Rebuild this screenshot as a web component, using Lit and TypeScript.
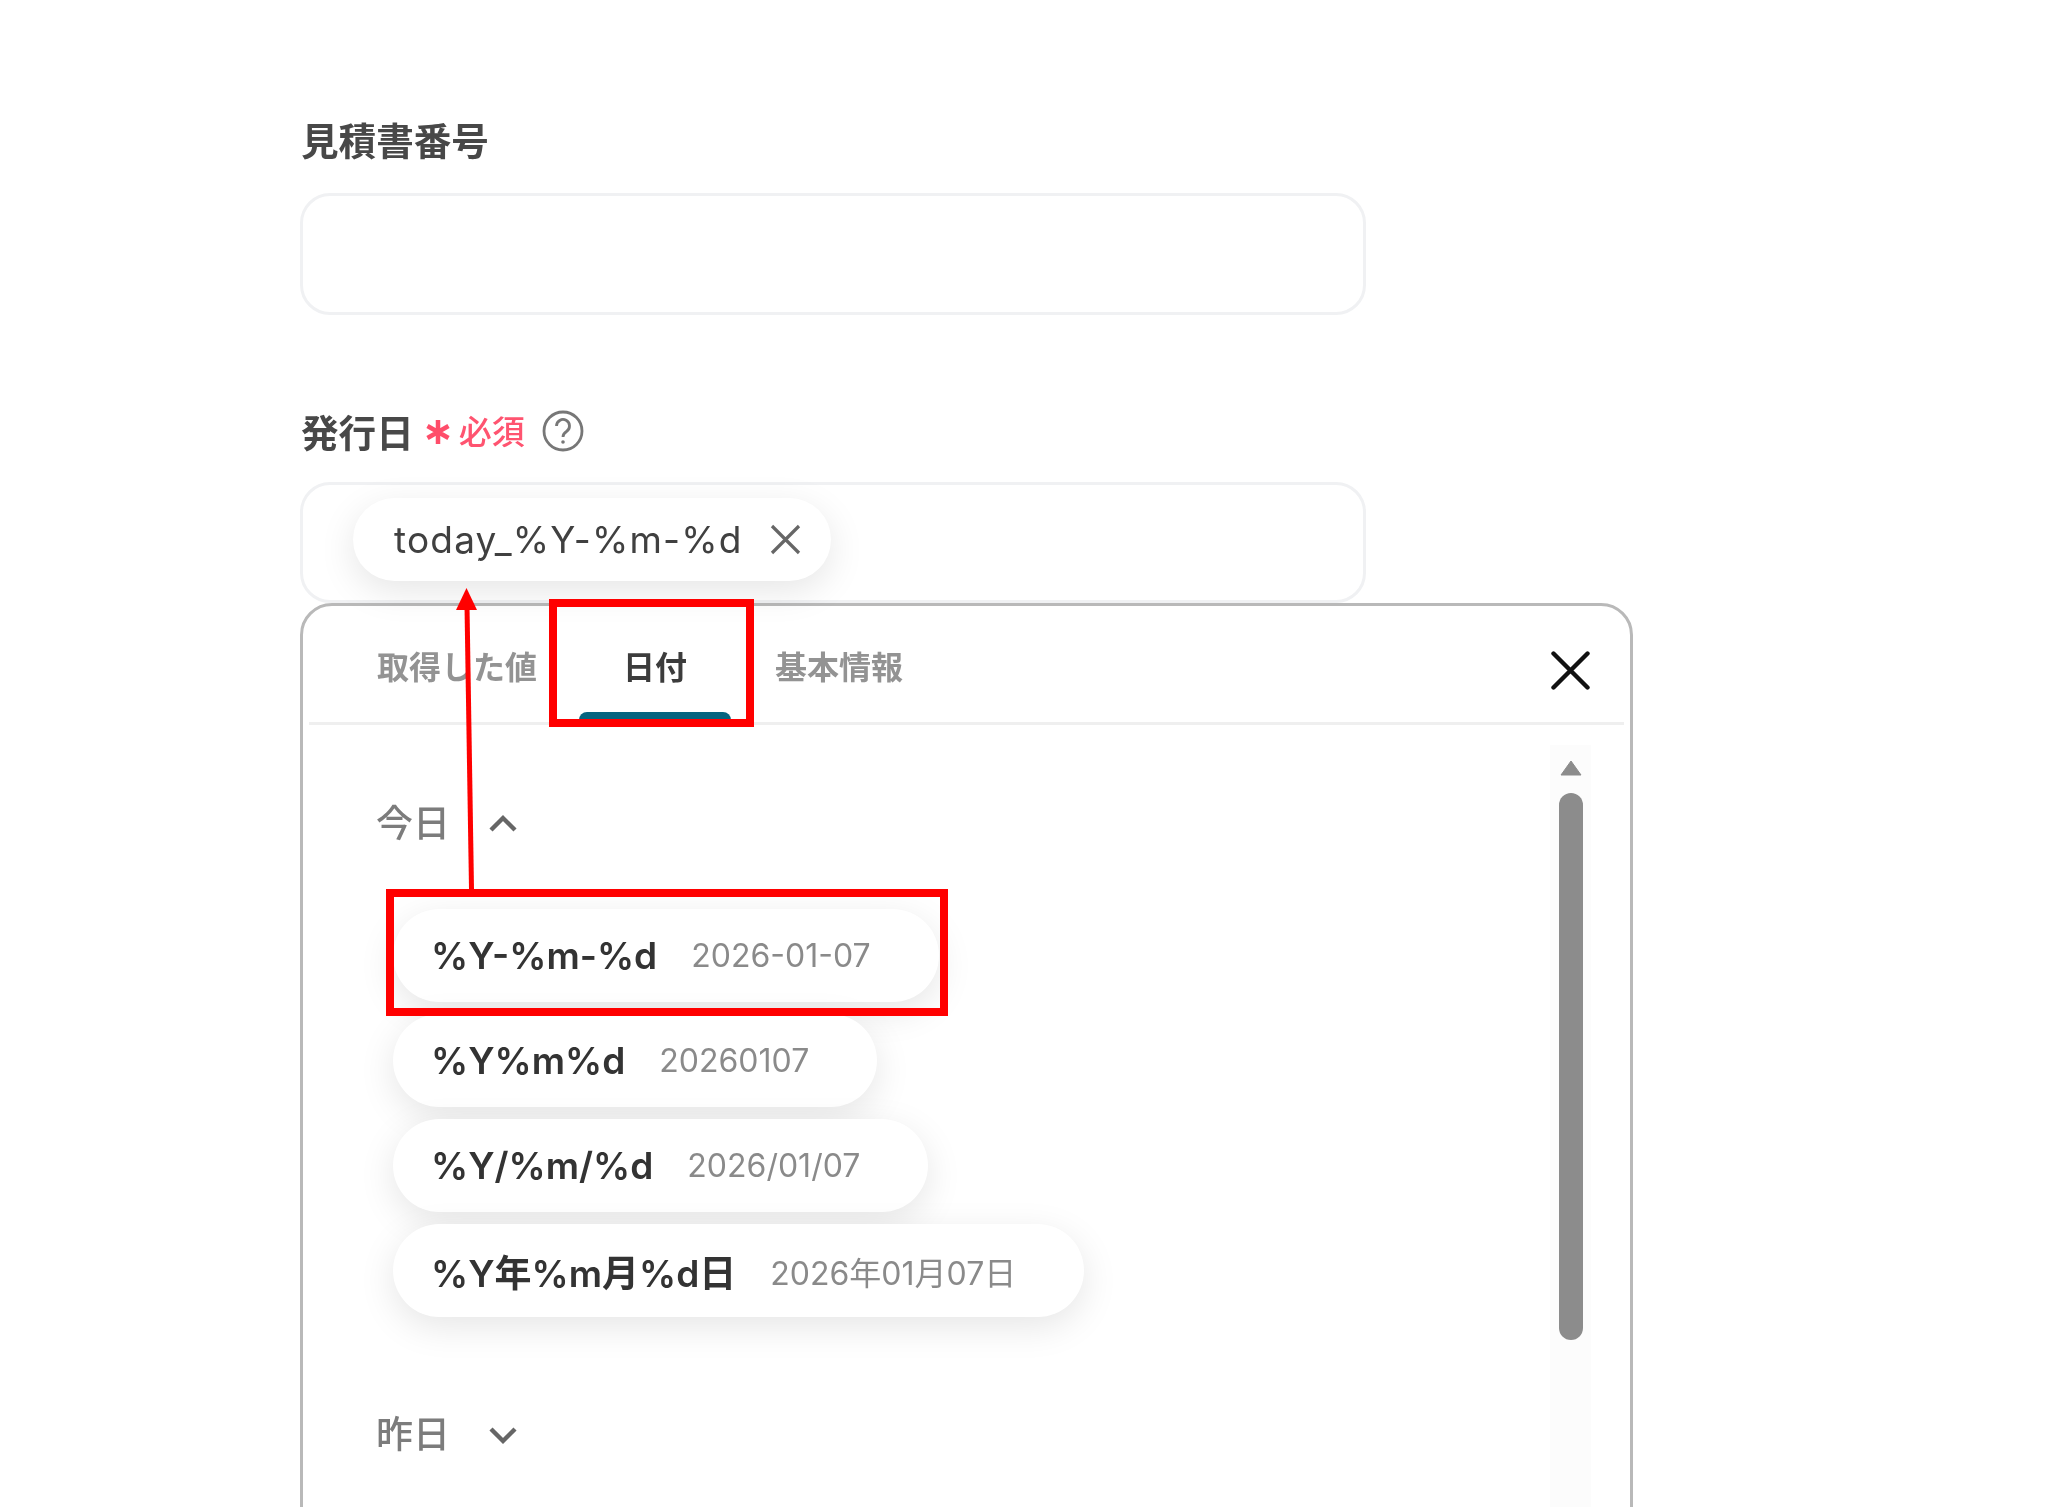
import { LitElement, html, css, svg } from "lit";
import { customElement } from "lit/decorators.js";

const items = [
  { name: "%Y-%m-%d", value: "2026-01-07" },
  { name: "%Y%m%d", value: "20260107" },
  { name: "%Y/%m/%d", value: "2026/01/07" },
  { name: "%Y年%m月%d日", value: "2026年01月07日" },
];

@customElement("app-root")
export class AppRoot extends LitElement {
  static styles = css`
    :host {
      display: block;
      height: 1507px;
      overflow: hidden;
      position: relative;
      background: #fff;
      font-family: Inter, "Noto Sans CJK JP", sans-serif;
      color: #333;
    }
    .page { padding: 110px 0 0 300px; width: 1333px; filter: blur(0.6px); }
    .label {
      display: flex; align-items: center; height: 56px;
      font-size: 37.6px; font-weight: 700; color: #484848; padding-left: 1px;
    }
    .label.second { margin-top: 87px; }
    .req { font-size: 33px; font-weight: 500; color: #ff5470; margin-left: 8px; }
    .star { margin-left: 11px; margin-top: 4px; display: block; }
    .help { margin-left: 17px; margin-top: 2px; display: block; }
    .input {
      width: 1066px; height: 122px; box-sizing: border-box;
      border: 3px solid #f0f1f3; border-radius: 30px; background: #fff;
    }
    .input.first { margin-top: 27px; }
    .input.second { margin-top: 24px; height: 121px; display: flex; align-items: center; padding: 0 0 6px 50px; }
    .chip {
      height: 83px; box-sizing: border-box; display: flex; align-items: center; gap: 27px;
      padding: 0 30px 0 41px; border-radius: 42px; background: #fff;
      box-shadow: 0 10px 36px rgba(0,0,0,.1);
      font-size: 37px; letter-spacing: 1.2px; color: #404040;
    }
    .chip svg { display: block; }
    .popup {
      box-sizing: border-box; height: 1000px; border: 3px solid #b9b9b9; border-radius: 32px;
      background: #fff; display: flex; flex-direction: column; padding: 0 6px;
    }
    .tabs { display: flex; height: 116px; border-bottom: 3px solid #efefef; padding-left: 24px; box-sizing: content-box; }
    .tab {
      position: relative; padding: 37px 44px 0; font-size: 32px; font-weight: 700; line-height: 50px; color: #939393;
    }
    .tab:first-child { padding-right: 42px; }
    .tab.active { color: #3c3c3c; }
    .tab.active::after {
      content: ""; position: absolute; left: 0; right: 0; bottom: -2px; height: 12px;
      background: #04647f; border-radius: 8px 8px 0 0;
    }
    .close { margin: 45px 34px 0 auto; display: block; }
    .body { flex: 1; display: flex; min-height: 0; }
    .content { flex: 1; padding: 68px 0 0 67px; }
    .heading {
      display: flex; align-items: center; gap: 37px; height: 56px;
      font-size: 37px; font-weight: 500; color: #7c7c7c;
    }
    .heading svg { display: block; margin-top: 5px; margin-left: 1px; }
    .list { display: flex; flex-direction: column; align-items: flex-start; gap: 12px; margin: 60px 0 87px 17px; }
    .item {
      height: 93px; box-sizing: border-box; display: flex; align-items: center; gap: 34px;
      padding: 0 68px 0 38px; border-radius: 47px; background: #fff;
      box-shadow: 0 10px 36px rgba(0,0,0,.1);
    }
    .name { font-size: 37px; font-weight: 600; color: #333; }
    .value { font-size: 32px; color: #8a8a8a; }
    .track {
      width: 41px; margin: 20px 33px 0 0; background: #fcfcfc;
      display: flex; flex-direction: column; align-items: center; padding-top: 15px;
    }
    .track svg { display: block; }
    .thumb { width: 24px; height: 547px; margin-top: 17px; border-radius: 12px; background: #8c8c8c; }
    .mark { position: absolute; box-sizing: border-box; border: 8px solid #ff0000; pointer-events: none; }
    .mark.tab-mark { left: 549px; top: 599px; width: 205px; height: 128px; }
    .mark.item-mark { left: 386px; top: 889px; width: 562px; height: 127px; }
    .arrow { position: absolute; left: 450px; top: 580px; pointer-events: none; }
  `;

  private chevron(up: boolean) {
    const d = up ? "M3 16 L15 4 L27 16" : "M3 4 L15 16 L27 4";
    return html`<svg width="30" height="20" viewBox="0 0 30 20"><path d=${d} fill="none" stroke="#666" stroke-width="4.4"/></svg>`;
  }

  render() {
    return html`
      <div class="page">
        <div class="label">見積書番号</div>
        <div class="input first"></div>
        <div class="label second">
          発行日
          <svg class="star" width="26" height="28" viewBox="0 0 26 28">
            <path d="M13 2 V26 M2.5 8 L23.5 20 M23.5 8 L2.5 20" stroke="#ff4d6a" stroke-width="4.5" fill="none"/>
          </svg>
          <span class="req">必須</span>
          <svg class="help" width="42" height="42" viewBox="0 0 42 42">
            <circle cx="21" cy="21" r="19" fill="none" stroke="#777" stroke-width="2.8"/>
            <path d="M14.5 16 a6.5 6.5 0 1 1 10 5.5 c-2.5 1.6 -3.5 3 -3.5 5.5" fill="none" stroke="#777" stroke-width="2.8"/>
            <circle cx="21" cy="32" r="1.8" fill="#777"/>
          </svg>
        </div>
        <div class="input second">
          <div class="chip">
            <span>today_%Y-%m-%d</span>
            <svg width="31" height="31" viewBox="0 0 31 31"><path d="M2 2 L29 29 M29 2 L2 29" stroke="#666" stroke-width="3.2" fill="none"/></svg>
          </div>
        </div>
        <div class="popup">
          <div class="tabs">
            <div class="tab">取得した値</div>
            <div class="tab active">日付</div>
            <div class="tab">基本情報</div>
            <svg class="close" width="39" height="39" viewBox="0 0 39 39"><path d="M2.5 2.5 L36.5 36.5 M36.5 2.5 L2.5 36.5" stroke="#111" stroke-width="4.4" stroke-linecap="round" fill="none"/></svg>
          </div>
          <div class="body">
            <div class="content">
              <div class="heading"><span>今日</span>${this.chevron(true)}</div>
              <div class="list">
                ${items.map(
                  (i) => html`<div class="item"><span class="name">${i.name}</span><span class="value">${i.value}</span></div>`
                )}
              </div>
              <div class="heading"><span>昨日</span>${this.chevron(false)}</div>
            </div>
            <div class="track">
              <svg width="22" height="16" viewBox="0 0 22 16"><path d="M11 1 L21 15 H1 Z" fill="#8c8c8c" stroke="#8c8c8c" stroke-linejoin="round"/></svg>
              <div class="thumb"></div>
            </div>
          </div>
        </div>
      </div>
      <div class="mark tab-mark"></div>
      <div class="mark item-mark"></div>
      <svg class="arrow" width="40" height="312" viewBox="0 0 40 312">
        ${svg`<path d="M21.5 309 L17 26" stroke="#f00" stroke-width="5" fill="none"/><path d="M16.5 8 L27 30 H6 Z" fill="#f00"/>`}
      </svg>
    `;
  }
}
